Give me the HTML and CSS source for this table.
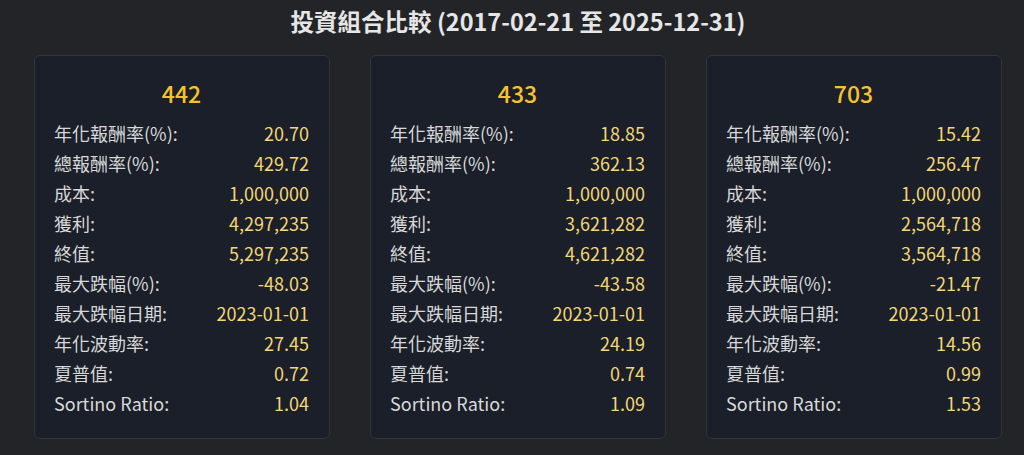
FILE: index.html
```html
<!DOCTYPE html>
<html lang="zh-Hant">
<head>
<meta charset="utf-8">
<title>投資組合比較</title>
<link rel="stylesheet" href="styles.css">
</head>
<body>
<main class="page">
  <h1 class="title">投資組合比較 (2017-02-21 至 2025-12-31)</h1>
  <section class="cards">
    <div class="card">
      <div class="card-title">442</div>
      <div class="row"><span class="label">年化報酬率(%):</span><span class="value">20.70</span></div>
      <div class="row"><span class="label">總報酬率(%):</span><span class="value">429.72</span></div>
      <div class="row"><span class="label">成本:</span><span class="value">1,000,000</span></div>
      <div class="row"><span class="label">獲利:</span><span class="value">4,297,235</span></div>
      <div class="row"><span class="label">終值:</span><span class="value">5,297,235</span></div>
      <div class="row"><span class="label">最大跌幅(%):</span><span class="value">-48.03</span></div>
      <div class="row"><span class="label">最大跌幅日期:</span><span class="value">2023-01-01</span></div>
      <div class="row"><span class="label">年化波動率:</span><span class="value">27.45</span></div>
      <div class="row"><span class="label">夏普值:</span><span class="value">0.72</span></div>
      <div class="row"><span class="label">Sortino Ratio:</span><span class="value">1.04</span></div>
    </div>
    <div class="card">
      <div class="card-title">433</div>
      <div class="row"><span class="label">年化報酬率(%):</span><span class="value">18.85</span></div>
      <div class="row"><span class="label">總報酬率(%):</span><span class="value">362.13</span></div>
      <div class="row"><span class="label">成本:</span><span class="value">1,000,000</span></div>
      <div class="row"><span class="label">獲利:</span><span class="value">3,621,282</span></div>
      <div class="row"><span class="label">終值:</span><span class="value">4,621,282</span></div>
      <div class="row"><span class="label">最大跌幅(%):</span><span class="value">-43.58</span></div>
      <div class="row"><span class="label">最大跌幅日期:</span><span class="value">2023-01-01</span></div>
      <div class="row"><span class="label">年化波動率:</span><span class="value">24.19</span></div>
      <div class="row"><span class="label">夏普值:</span><span class="value">0.74</span></div>
      <div class="row"><span class="label">Sortino Ratio:</span><span class="value">1.09</span></div>
    </div>
    <div class="card">
      <div class="card-title">703</div>
      <div class="row"><span class="label">年化報酬率(%):</span><span class="value">15.42</span></div>
      <div class="row"><span class="label">總報酬率(%):</span><span class="value">256.47</span></div>
      <div class="row"><span class="label">成本:</span><span class="value">1,000,000</span></div>
      <div class="row"><span class="label">獲利:</span><span class="value">2,564,718</span></div>
      <div class="row"><span class="label">終值:</span><span class="value">3,564,718</span></div>
      <div class="row"><span class="label">最大跌幅(%):</span><span class="value">-21.47</span></div>
      <div class="row"><span class="label">最大跌幅日期:</span><span class="value">2023-01-01</span></div>
      <div class="row"><span class="label">年化波動率:</span><span class="value">14.56</span></div>
      <div class="row"><span class="label">夏普值:</span><span class="value">0.99</span></div>
      <div class="row"><span class="label">Sortino Ratio:</span><span class="value">1.53</span></div>
    </div>
  </section>
</main>
</body>
</html>
```

FILE: styles.css
```css
html, body {
  margin: 0;
  padding: 0;
  background: #222427;
}
body {
  font-family: "Noto Sans CJK TC", "Noto Sans", sans-serif;
  color: #d6d6d6;
}
.page {
  width: 968px;
  padding: 4px 0 0 34px;
}
.title {
  margin: 0;
  text-align: center;
  font-size: 23.5px;
  line-height: 34px;
  font-weight: 700;
  color: #e6e6e6;
}
.cards {
  margin-top: 17px;
  display: grid;
  grid-template-columns: repeat(3, 296px);
  gap: 40px;
}
.card {
  box-sizing: border-box;
  height: 384px;
  background: #1a1f29;
  border: 1px solid #30353e;
  border-radius: 6px;
  padding: 23px 20px 20px 19px;
}
.card-title {
  text-align: center;
  font-size: 23px;
  line-height: 28px;
  font-weight: 500;
  color: #f7c12d;
  margin-bottom: 11px;
}
.row {
  display: flex;
  justify-content: space-between;
  align-items: center;
  height: 30px;
  font-size: 18px;
}
.label {
  color: #d8d8d8;
}
.value {
  color: #f3d675;
}
```
